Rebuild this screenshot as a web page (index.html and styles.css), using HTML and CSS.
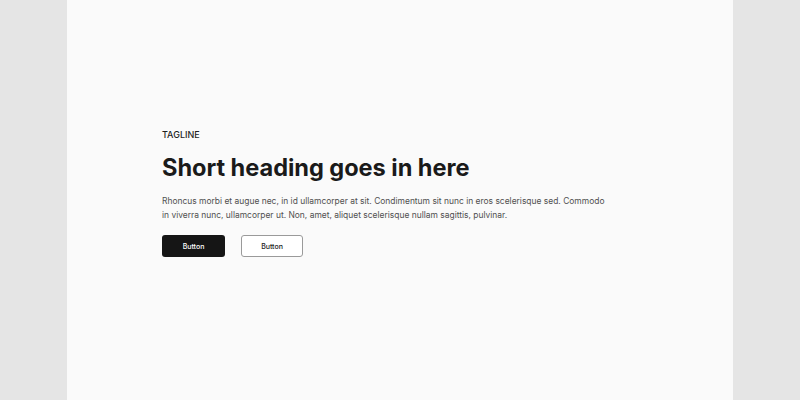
FILE: index.html
```html
<!DOCTYPE html>
<html lang="en">
<head>
<meta charset="utf-8">
<title>Header</title>
<link rel="stylesheet" href="styles.css">
</head>
<body>
<div class="page">
  <section class="header">
    <div class="content">
      <p class="tagline">TAGLINE</p>
      <h1 class="heading">Short heading goes in here</h1>
      <p class="text">Rhoncus morbi et augue nec, in id ullamcorper at sit. Condimentum sit nunc in eros scelerisque sed. Commodo in viverra nunc, ullamcorper ut. Non, amet, aliquet scelerisque nullam sagittis, pulvinar.</p>
      <div class="actions">
        <a class="btn btn-primary">Button</a>
        <a class="btn btn-secondary">Button</a>
      </div>
    </div>
  </section>
</div>
</body>
</html>
```
FILE: styles.css
```css
html, body {
  margin: 0;
  padding: 0;
  height: 100%;
}
body {
  background: #e5e5e5;
  font-family: Inter, "Noto Sans", sans-serif;
  color: #1a1a1a;
}
.page {
  width: 666px;
  margin: 0 auto;
  min-height: 400px;
  background: #fafafa;
}
.header {
  padding: 129px 95px 0;
}
.content {
  max-width: 446px;
}
.tagline {
  margin: 0 0 12px;
  font-size: 9px;
  font-weight: 500;
  line-height: 12px;
  color: #1f1f1f;
}
.heading {
  margin: 0 0 11px;
  font-size: 23.6px;
  font-weight: 700;
  line-height: 30px;
  letter-spacing: -0.05px;
  color: #1a1a1a;
}
.text {
  margin: 0 0 13px;
  font-size: 8.45px;
  line-height: 14px;
  color: #505050;
}
.actions {
  display: flex;
  gap: 16px;
}
.btn {
  display: flex;
  align-items: center;
  justify-content: center;
  box-sizing: border-box;
  height: 22px;
  width: 63px;
  border-radius: 3px;
  font-size: 7px;
  font-weight: 500;
}
.btn-primary {
  background: #151515;
  color: #ffffff;
}
.btn-secondary {
  background: #ffffff;
  color: #1a1a1a;
  border: 1px solid #9a9a9a;
  width: 62px;
}
```
